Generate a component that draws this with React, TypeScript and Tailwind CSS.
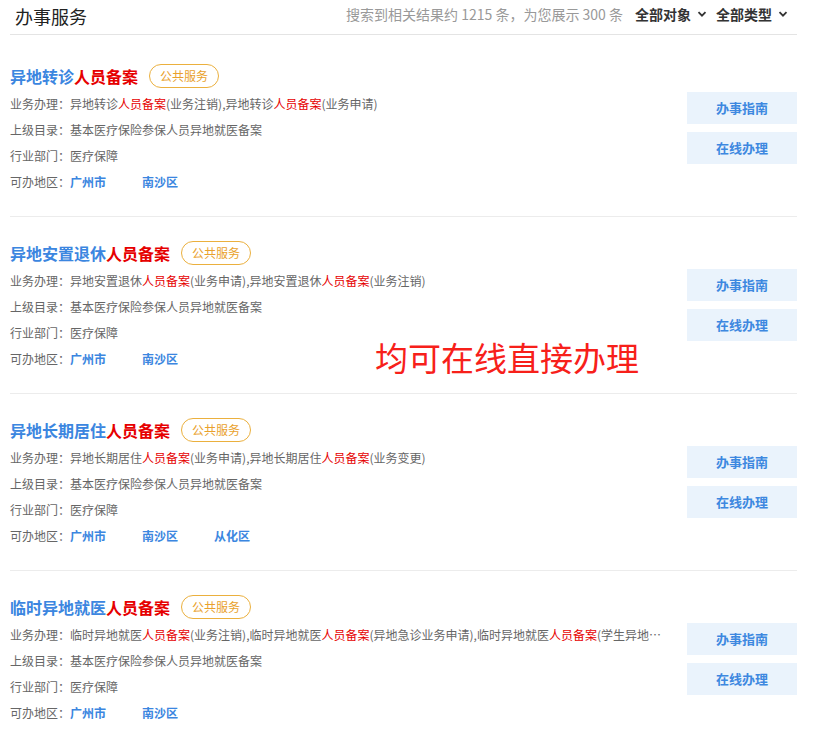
import React from "react";

type Item = {
  pre: string;
  biz: React.ReactNode;
  regions: string[];
};

const R = ({ children }: { children: React.ReactNode }) => (
  <span className="text-[#e60000]">{children}</span>
);

const items: Item[] = [
  {
    pre: "异地转诊",
    biz: (
      <>
        异地转诊<R>人员备案</R>(业务注销),异地转诊<R>人员备案</R>(业务申请)
      </>
    ),
    regions: ["广州市", "南沙区"],
  },
  {
    pre: "异地安置退休",
    biz: (
      <>
        异地安置退休<R>人员备案</R>(业务申请),异地安置退休<R>人员备案</R>(业务注销)
      </>
    ),
    regions: ["广州市", "南沙区"],
  },
  {
    pre: "异地长期居住",
    biz: (
      <>
        异地长期居住<R>人员备案</R>(业务申请),异地长期居住<R>人员备案</R>(业务变更)
      </>
    ),
    regions: ["广州市", "南沙区", "从化区"],
  },
  {
    pre: "临时异地就医",
    biz: (
      <>
        临时异地就医<R>人员备案</R>(业务注销),临时异地就医<R>人员备案</R>(异地急诊业务申请),临时异地就医<R>人员备案</R>(学生异地就医业务申请)
      </>
    ),
    regions: ["广州市", "南沙区"],
  },
];

const Chevron = () => (
  <svg width="10" height="10" viewBox="0 0 10 10" className="ml-[6px] mr-[9px]">
    <path d="M1.5 3.2 L5 6.7 L8.5 3.2" fill="none" stroke="#333" strokeWidth="1.8" />
  </svg>
);

export default function App() {
  return (
    <div
      className="relative w-[835px] h-[729px] bg-white overflow-hidden"
      style={{ fontFamily: '"Noto Sans CJK SC", "Noto Sans", sans-serif' }}
    >
      <div className="ml-[10px] w-[787px]">
        <div className="h-[35px] flex items-center justify-between border-b border-[#e4e4e4]">
          <div className="pl-[5px] text-[18px] text-[#222] leading-none -mt-[3px]">办事服务</div>
          <div className="flex items-center text-[14px] leading-none -mt-[7px]">
            <span className="text-[#999] mr-[12px]">搜索到相关结果约 1215 条，为您展示 300 条</span>
            <span className="font-bold text-[#333]">全部对象</span>
            <Chevron />
            <span className="font-bold text-[#333]">全部类型</span>
            <Chevron />
          </div>
        </div>
        <div className="pt-[5px]">
          {items.map((it, i) => (
            <div key={i} className="pt-[24px] pb-[21px] border-b border-[#ececec]">
              <div className="h-[24px] flex items-center">
                <span className="text-[16px] font-bold leading-none">
                  <span className="text-[#3b86e0]">{it.pre}</span>
                  <span className="text-[#e60000]">人员备案</span>
                </span>
                <span className="ml-[11px] h-[24px] px-[10px] flex items-center rounded-full border border-[#ebb03e] text-[12px] text-[#e9a12c]">
                  公共服务
                </span>
              </div>
              <div className="mt-[3px] flex">
                <div className="flex-1 min-w-0 mr-[25px] text-[12px] text-[#666]">
                  <div className="h-[26px] flex items-center">
                    <span className="w-[60px] shrink-0">业务办理：</span>
                    <span className="truncate">{it.biz}</span>
                  </div>
                  <div className="h-[26px] flex items-center">
                    <span className="w-[60px] shrink-0">上级目录：</span>
                    <span>基本医疗保险参保人员异地就医备案</span>
                  </div>
                  <div className="h-[26px] flex items-center">
                    <span className="w-[60px] shrink-0">行业部门：</span>
                    <span>医疗保障</span>
                  </div>
                  <div className="h-[26px] flex items-center">
                    <span className="w-[60px] shrink-0">可办地区：</span>
                    {it.regions.map((r) => (
                      <span key={r} className="w-[72px] font-bold text-[#3b86e0]">
                        {r}
                      </span>
                    ))}
                  </div>
                </div>
                <div className="w-[110px] mt-[1px] flex flex-col gap-[8px]">
                  <div className="h-[32px] flex items-center justify-center bg-[#eaf3fc] text-[13px] font-bold text-[#3d88e0]">
                    办事指南
                  </div>
                  <div className="h-[32px] flex items-center justify-center bg-[#eaf3fc] text-[13px] font-bold text-[#3d88e0]">
                    在线办理
                  </div>
                </div>
              </div>
            </div>
          ))}
        </div>
      </div>
      <div className="absolute left-[375px] top-[335px] text-[33px] leading-[44px] text-[#f7201a]">
        均可在线直接办理
      </div>
    </div>
  );
}
